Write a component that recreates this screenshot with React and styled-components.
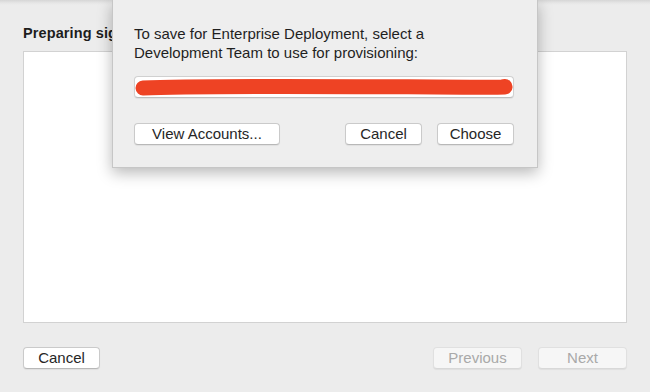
import React from 'react'
import styled, { createGlobalStyle } from 'styled-components'

const Global = createGlobalStyle`
  html, body { margin: 0; padding: 0; }
  body {
    background: #ececec;
    font-family: "Helvetica Neue", "Liberation Sans", Arial, sans-serif;
    color: #222;
    -webkit-font-smoothing: antialiased;
  }
`

const Window = styled.div`
  position: relative;
  width: 650px;
  height: 392px;
  overflow: hidden;
  background: linear-gradient(#d6d6d6 0, #e6e6e6 3px, #ececec 5px);
  display: flex;
  flex-direction: column;
  padding: 24px 23px 0;
  box-sizing: border-box;
`

const Title = styled.h2`
  margin: 0;
  height: 18px;
  font-size: 14.5px;
  line-height: 18px;
  font-weight: bold;
  letter-spacing: 0.1px;
  color: #1d1d1d;
  white-space: nowrap;
`

const Panel = styled.div`
  margin-top: 9px;
  height: 272px;
  background: #fff;
  border: 1px solid #d2d2d2;
  box-sizing: border-box;
`

const Footer = styled.div`
  display: flex;
  align-items: center;
  gap: 16px;
  margin-top: 24px;
`

const Spacer = styled.div`
  flex: 1;
`

const Button = styled.button`
  height: 22px;
  width: ${p => p.w}px;
  padding: 0;
  box-sizing: border-box;
  border-radius: 4px;
  border: 1px solid ${p => (p.disabled ? '#e0e0e0' : '#cacaca')};
  border-bottom-color: ${p => (p.disabled ? '#d8d8d8' : '#b8b8b8')};
  background: ${p => (p.disabled ? '#f6f6f6' : '#fff')};
  color: ${p => (p.disabled ? '#a9a9a9' : '#262626')};
  font-family: inherit;
  font-size: 15px;
  line-height: 20px;
  box-shadow: 0 1px 1px rgba(0, 0, 0, 0.06);
`

const Sheet = styled.div`
  position: absolute;
  left: 112px;
  top: 0;
  width: 426px;
  height: 168px;
  box-sizing: border-box;
  background: #eeeeee;
  border: 1px solid #c6c6c6;
  border-top: none;
  box-shadow: 0 5px 14px rgba(0, 0, 0, 0.28);
  padding: 24px 22px 0 21px;
  display: flex;
  flex-direction: column;
`

const Message = styled.p`
  margin: 0;
  font-size: 15px;
  line-height: 19px;
  color: #1f1f1f;
`

const Popup = styled.div`
  position: relative;
  margin-top: 14px;
  height: 22px;
  width: 380px;
  box-sizing: border-box;
  background: #fff;
  border: 1px solid #d0d0d0;
  border-bottom-color: #bdbdbd;
  border-radius: 4px;
  box-shadow: 0 1px 1px rgba(0, 0, 0, 0.06);
`

const Scribble = styled.svg`
  position: absolute;
  left: 0;
  top: 1px;
`

const SheetButtons = styled.div`
  display: flex;
  align-items: center;
  gap: 15px;
  width: 380px;
  margin-top: 25px;
`

export default function App() {
  return (
    <>
      <Global />
      <Window>
        <Title>Preparing signing…</Title>
        <Panel />
        <Footer>
          <Button w={77}>Cancel</Button>
          <Spacer />
          <Button w={89} disabled>Previous</Button>
          <Button w={89} disabled>Next</Button>
        </Footer>

        <Sheet>
          <Message>
            To save for Enterprise Deployment, select a
            <br />
            Development Team to use for provisioning:
          </Message>
          <Popup>
            <Scribble width="380" height="20" viewBox="0 0 380 20">
              <path
                d="M8 10 C 60 7.5, 200 8.5, 300 9 S 360 9, 370 8.5"
                fill="none"
                stroke="#ee4324"
                strokeWidth="15"
                strokeLinecap="round"
              />
            </Scribble>
          </Popup>
          <SheetButtons>
            <Button w={146}>View Accounts...</Button>
            <Spacer />
            <Button w={77}>Cancel</Button>
            <Button w={77}>Choose</Button>
          </SheetButtons>
        </Sheet>
      </Window>
    </>
  )
}
